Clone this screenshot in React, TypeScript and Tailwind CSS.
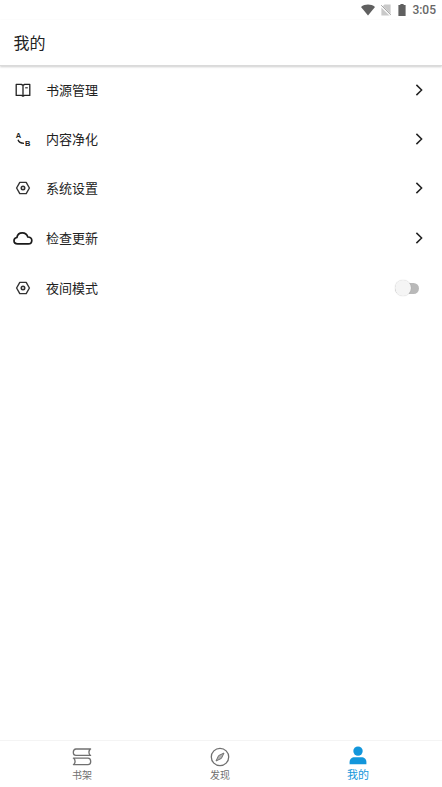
import React, { useState } from 'react';

function BookIcon() {
    return (
        <svg className="w-5 h-5" viewBox="0 0 20 20" fill="none" stroke="#222" strokeWidth="1.3" strokeLinejoin="round">
            <path d="M10 5.4 8.4 4.4H3.2V15.4H8.6L10 16.3L11.4 15.4H16.8V4.4H11.6L10 5.4V16.2" />
            <path d="M12.2 7.8H14.8" strokeWidth="1.1" />
        </svg>
    );
}

function ReplaceIcon() {
    return (
        <svg className="w-5 h-5 font-['Liberation_Sans',sans-serif] font-bold text-[7.5px]" viewBox="0 0 20 20" fill="#222">
            <text x="2.8" y="8.8">A</text>
            <text x="11.9" y="17.2">B</text>
            <path d="M5 10.8C5.6 12.8 7.4 14.2 11 14.4" fill="none" stroke="#222" strokeWidth="1.3" />
        </svg>
    );
}

function SettingIcon() {
    return (
        <svg className="w-5 h-5" viewBox="0 0 20 20" fill="none" stroke="#333" strokeWidth="1.4" strokeLinejoin="round">
            <path d="M6.8 4.4H13.2L16.4 10L13.2 15.6H6.8L3.6 10Z" />
            <circle cx="10" cy="10" r="1.7" strokeWidth="1.6" />
        </svg>
    );
}

function CloudIcon() {
    return (
        <svg className="w-5 h-5" viewBox="0 0 20 20" fill="none" stroke="#1a1a1a" strokeWidth="1.7" strokeLinejoin="round">
            <path d="M4.6 15.9C2.4 15.9 1 14.5 1 12.7C1 11 2.2 9.8 3.9 9.5C4.4 6.6 6.6 4.8 9.3 4.8C12 4.8 14.1 6.4 14.8 9C17.2 9.1 18.8 10.5 18.8 12.5C18.8 14.5 17.3 15.9 15.2 15.9Z" />
        </svg>
    );
}

function ArrowIcon() {
    return (
        <svg className="w-3 h-3" viewBox="0 0 12 12" fill="none" stroke="#222" strokeWidth="1.5">
            <path d="M3.4 0.9 8.6 6 3.4 11.1" />
        </svg>
    );
}

function ShelfIcon() {
    return (
        <svg className="w-5 h-5" viewBox="0 0 20 20" fill="none" stroke="#707070" strokeWidth="1.3" strokeLinejoin="round" strokeLinecap="round">
            <path d="M18.6 2H4C.4 2 .4 8.4 4 8.4H18.6M18.2 2C16.6 4 16.6 6.4 18.2 8.4" />
            <path d="M1.4 11.2H16C19.6 11.2 19.6 17.6 16 17.6H1.4M1.8 11.2C3.4 13.2 3.4 15.6 1.8 17.6" />
        </svg>
    );
}

function CompassIcon() {
    return (
        <svg className="w-5 h-5" viewBox="0 0 20 20" fill="none" stroke="#707070" strokeWidth="1.3" strokeLinejoin="round">
            <circle cx="10" cy="10" r="8.7" />
            <path d="M14 6 11.4 11.4 6 14 8.6 8.6Z" fill="#b5b5b5" strokeWidth="1" />
        </svg>
    );
}

function UserIcon() {
    return (
        <svg className="w-5 h-5" viewBox="0 0 20 20" fill="#1296db">
            <circle cx="10" cy="5.1" r="4.7" />
            <path d="M1.6 18.3V16.2C1.6 13.2 3.8 11.3 6.6 11.3H13.4C16.2 11.3 18.4 13.2 18.4 16.2V18.3Z" />
        </svg>
    );
}

function StatusBar() {
    return (
        <div className="h-5 shrink-0 flex items-center justify-end pr-[6px] text-[#666]">
            <svg className="w-[14px] h-3 mr-[6px] -mt-px" viewBox="0 0 14 12" fill="#606060">
                <path d="M0 3C4-.2 10-.2 14 3L7 11.6Z" />
            </svg>
            <svg className="w-[10px] h-3 mr-[7px] -mt-px" viewBox="0 0 10 12">
                <path d="M3.5.5H9.6V11.5H.4V3.6Z" fill="#c9c9c9" />
                <path d="M.2 2 9.8 11.4" stroke="#fff" strokeWidth="2" />
                <path d="M.2 1.2 9.8 10.9" stroke="#999" strokeWidth="0.9" />
            </svg>
            <svg className="w-2 h-3 mr-[6px] -mt-px" viewBox="0 0 8 12" fill="#606060">
                <path d="M2.4 0H5.6V1.1H7.6V12H.4V1.1H2.4Z" />
            </svg>
            <span className="font-['Roboto',sans-serif] font-medium text-[12px] leading-5">3:05</span>
        </div>
    );
}

const menus = [
    { label: '书源管理', icon: BookIcon },
    { label: '内容净化', icon: ReplaceIcon },
    { label: '系统设置', icon: SettingIcon },
    { label: '检查更新', icon: CloudIcon },
];

export default function App() {
    const [night, setNight] = useState(false);

    return (
        <div className="h-screen flex flex-col bg-white text-[#222] font-['Noto_Sans_CJK_SC',sans-serif]">
            <StatusBar />
            <header className="h-[46px] shrink-0 flex items-center pl-[13.5px] pb-px border-b border-[#dadada] shadow-[0_1px_2px_rgba(0,0,0,0.2)]">
                <h1 className="text-base leading-6">我的</h1>
            </header>

            <main className="flex-1">
                {menus.map(({ label, icon: Icon }) => (
                    <div key={label} className="h-[49.3px] flex items-center pl-[13px] pr-[17px] pb-[2px]">
                        <Icon />
                        <span className="ml-[13px] flex-1 text-[13px] leading-5">{label}</span>
                        <ArrowIcon />
                    </div>
                ))}
                <div className="h-[49.3px] flex items-center pl-[13px] pr-[23px]">
                    <SettingIcon />
                    <span className="ml-[13px] flex-1 text-[13px] leading-5">夜间模式</span>
                    <button
                        type="button"
                        aria-label="夜间模式"
                        onClick={() => setNight(!night)}
                        className={`mt-px w-6 h-[11px] rounded-full flex items-center ${night ? 'justify-end bg-[#1296db]' : 'bg-[#b9b9b9]'}`}
                    >
                        <span className="w-4 h-4 shrink-0 rounded-full bg-[#f5f5f5] shadow-[0_0_1px_rgba(0,0,0,0.25)]" />
                    </button>
                </div>
            </main>

            <nav className="h-[47px] shrink-0 border-t border-[#f4f4f4] flex justify-between pl-[62px] pr-[64px] pt-[6px]">
                <div className="w-10 flex flex-col items-center text-[#707070]">
                    <ShelfIcon />
                    <span className="text-[10px] leading-4">书架</span>
                </div>
                <div className="w-10 flex flex-col items-center text-[#707070]">
                    <CompassIcon />
                    <span className="text-[10px] leading-4">发现</span>
                </div>
                <div className="w-10 -mt-px flex flex-col items-center text-[#1296db]">
                    <UserIcon />
                    <span className="text-[11px] leading-4">我的</span>
                </div>
            </nav>
        </div>
    );
}
